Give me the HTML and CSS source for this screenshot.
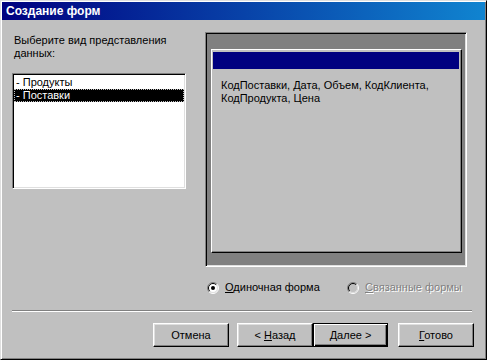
FILE: index.html
```html
<!DOCTYPE html>
<html lang="ru">
<head>
    <meta charset="UTF-8">
    <title>Создание форм</title>
    <link rel="stylesheet" href="styles.css">
</head>
<body>
    <div class="window">
        <div class="titlebar">Создание форм</div>

        <div class="dialog">
            <div class="top">
                <div class="left">
                    <div class="prompt">Выберите вид представления<br>данных:</div>
                    <ul class="list">
                        <li>- Продукты</li>
                        <li class="selected">- Поставки</li>
                    </ul>
                </div>

                <div class="right">
                    <div class="preview">
                        <div class="sample">
                            <div class="sample-bar"></div>
                            <p class="sample-text">КодПоставки, Дата, Объем, КодКлиента,<br>КодПродукта, Цена</p>
                        </div>
                    </div>

                    <div class="options">
                        <label class="option">
                            <svg class="radio" width="12" height="12" viewBox="0 0 12 12">
                                <circle cx="6" cy="6" r="5" fill="#fff"/>
                                <path d="M9.9 2.1 A5.5 5.5 0 0 0 2.1 9.9" stroke="#808080" fill="none"/>
                                <path d="M2.1 9.9 A5.5 5.5 0 0 0 9.9 2.1" stroke="#fff" fill="none"/>
                                <path d="M9.2 2.8 A4.5 4.5 0 0 0 2.8 9.2" stroke="#000" fill="none"/>
                                <path d="M2.8 9.2 A4.5 4.5 0 0 0 9.2 2.8" stroke="#dfdfdf" fill="none"/>
                                <circle cx="6" cy="6" r="2" fill="#000"/>
                            </svg>
                            <span><u>О</u>диночная форма</span>
                        </label>
                        <label class="option disabled">
                            <svg class="radio" width="12" height="12" viewBox="0 0 12 12">
                                <circle cx="6" cy="6" r="5" fill="#c0c0c0"/>
                                <path d="M9.9 2.1 A5.5 5.5 0 0 0 2.1 9.9" stroke="#808080" fill="none"/>
                                <path d="M2.1 9.9 A5.5 5.5 0 0 0 9.9 2.1" stroke="#fff" fill="none"/>
                                <path d="M9.2 2.8 A4.5 4.5 0 0 0 2.8 9.2" stroke="#000" fill="none"/>
                                <path d="M2.8 9.2 A4.5 4.5 0 0 0 9.2 2.8" stroke="#dfdfdf" fill="none"/>
                            </svg>
                            <span><u>С</u>вязанные формы</span>
                        </label>
                    </div>
                </div>
            </div>

            <div class="separator"></div>

            <div class="buttons">
                <button class="btn btn-cancel">Отмена</button>
                <button class="btn btn-back">&lt; <u>Н</u>азад</button>
                <button class="btn btn-default"><u>Д</u>алее &gt;</button>
                <button class="btn btn-finish"><u>Г</u>отово</button>
            </div>
        </div>
    </div>
</body>
</html>
```
FILE: styles.css
```css
body {
    margin: 0;
    background-color: #c0c0c0;
    font-family: "Liberation Sans", Arial, sans-serif;
    font-size: 11px;
    color: #000;
}

.window {
    box-sizing: border-box;
    width: 487px;
    height: 360px;
    padding: 1px;
    background-color: #c0c0c0;
    border: 1px solid;
    border-color: #dfdfdf #000 #000 #dfdfdf;
    box-shadow: inset 1px 1px #fff, inset -1px -1px #808080;
}

.titlebar {
    height: 18px;
    line-height: 18px;
    padding-left: 4px;
    background: linear-gradient(to right, #000080, #1084d0);
    color: #fff;
    font-weight: bold;
    font-size: 12px;
}

.dialog {
    padding: 12px 11px 0 10px;
}

.top {
    display: grid;
    grid-template-columns: 174px 262px;
    column-gap: 19px;
}

.prompt {
    margin-top: 2px;
    padding-left: 2px;
    line-height: 13px;
}

.list {
    box-sizing: border-box;
    width: 174px;
    height: 116px;
    margin: 13px 0 0 0;
    padding: 2px 1px 1px 1px;
    list-style: none;
    background-color: #fff;
    border: 1px solid;
    border-color: #808080 #fff #fff #808080;
    box-shadow: inset 1px 1px #000, inset -1px -1px #dfdfdf;
}

.list li {
    height: 13px;
    line-height: 13px;
    padding-left: 2px;
    white-space: nowrap;
}

.list li.selected {
    background-color: #000;
    color: #fff;
    outline: 1px dotted #c0c0c0;
    outline-offset: -1px;
}

.preview {
    box-sizing: border-box;
    width: 262px;
    height: 235px;
    padding: 16px 0 0 5px;
    background-color: #808080;
    border: 1px solid;
    border-color: #808080 #fff #fff #808080;
    box-shadow: inset 1px 1px #000, inset -1px -1px #dfdfdf;
}

.sample {
    box-sizing: border-box;
    width: 251px;
    height: 204px;
    padding: 2px 2px 0 1px;
    background-color: #c0c0c0;
    border: 1px solid;
    border-color: #fff #000 #000 #fff;
    box-shadow: inset -1px -1px #808080;
}

.sample-bar {
    height: 17px;
    background-color: #000080;
}

.sample-text {
    margin: 10px 0 0 0;
    padding-left: 8px;
    line-height: 13px;
    white-space: nowrap;
}

.options {
    display: flex;
    margin-top: 14px;
    padding-left: 2px;
}

.option {
    display: flex;
    align-items: center;
    gap: 6px;
    height: 13px;
    line-height: 13px;
}

.option:first-child {
    width: 140px;
}

.option.disabled {
    color: #808080;
    text-shadow: 1px 1px #fff;
}

.radio {
    flex: none;
}

.separator {
    height: 0;
    margin: 16px 2px 0 0;
    border-top: 1px solid #808080;
    border-bottom: 1px solid #fff;
}

.buttons {
    display: flex;
    justify-content: flex-end;
    margin-top: 11px;
}

.btn {
    box-sizing: border-box;
    width: 76px;
    height: 24px;
    padding: 0;
    font-family: "Liberation Sans", Arial, sans-serif;
    font-size: 11px;
    color: #000;
    background-color: #c0c0c0;
    border: 1px solid;
    border-color: #fff #000 #000 #fff;
    box-shadow: inset -1px -1px #808080, inset 1px 1px #dfdfdf;
}

.btn-cancel {
    margin-right: 8px;
}

.btn-default {
    width: 75px;
    margin-right: 10px;
    border: 1px solid #000;
    box-shadow: inset 1px 1px #fff, inset -1px -1px #000, inset -2px -2px #808080;
}

.btn u {
    text-underline-offset: 1px;
}
```
